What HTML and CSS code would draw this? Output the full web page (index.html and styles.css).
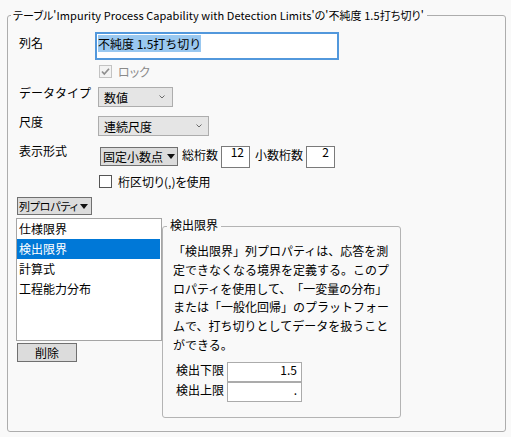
FILE: index.html
```html
<!DOCTYPE html>
<html lang="ja">
<head>
<meta charset="utf-8">
<title>列情報</title>
<link rel="stylesheet" href="styles.css">
</head>
<body>
<div class="panel">
  <div class="panel-title">テーブル'Impurity Process Capability with Detection Limits'の'不純度 1.5打ち切り'</div>

  <div class="row r-name">
    <div class="label">列名</div>
    <div class="name-field"><span class="sel">不純度 1.5打ち切り</span></div>
  </div>

  <div class="row r-lock indent">
    <div class="check disabled">
      <span class="box"><svg width="11" height="11" viewBox="0 0 11 11"><polyline points="2,5.5 4.3,8 9,2.8" fill="none" stroke="#8e8e8e" stroke-width="1.7"/></svg></span>
      <span class="check-text">ロック</span>
    </div>
  </div>

  <div class="row r-type">
    <div class="label">データタイプ</div>
    <div class="combo w-type"><span>数値</span><svg class="chev" width="6" height="4" viewBox="0 0 6 4"><polyline points="0.5,0.5 3,3 5.5,0.5" fill="none" stroke="#6a6a6a" stroke-width="1"/></svg></div>
  </div>

  <div class="row r-scale">
    <div class="label">尺度</div>
    <div class="combo w-scale"><span>連続尺度</span><svg class="chev" width="6" height="4" viewBox="0 0 6 4"><polyline points="0.5,0.5 3,3 5.5,0.5" fill="none" stroke="#6a6a6a" stroke-width="1"/></svg></div>
  </div>

  <div class="row r-format">
    <div class="label">表示形式</div>
    <div class="format-controls">
      <div class="menu-btn fmt"><span>固定小数点</span><svg width="8" height="5" viewBox="0 0 8 5"><polygon points="0,0 8,0 4,5" fill="#111"/></svg></div>
      <span class="inline-label first">総桁数</span>
      <div class="num-box">12</div>
      <span class="inline-label">小数桁数</span>
      <div class="num-box">2</div>
    </div>
  </div>

  <div class="row r-sep indent">
    <div class="check">
      <span class="box"></span>
      <span class="check-text">桁区切り(,)を使用</span>
    </div>
  </div>

  <div class="row r-props">
    <div class="menu-btn props"><span>列プロパティ</span><svg width="8" height="5" viewBox="0 0 8 5"><polygon points="0,0 8,0 4,5" fill="#111"/></svg></div>
  </div>

  <div class="props-area">
    <div class="props-left">
      <ul class="prop-list">
        <li>仕様限界</li>
        <li class="selected">検出限界</li>
        <li>計算式</li>
        <li>工程能力分布</li>
      </ul>
      <div class="push-btn">削除</div>
    </div>
    <div class="group">
      <div class="group-title">検出限界</div>
      <p class="desc">「検出限界」列プロパティは、応答を測定できなくなる境界を定義する。このプロパティを使用して、「一変量の分布」または「一般化回帰」のプラットフォームで、打ち切りとしてデータを扱うことができる。</p>
      <div class="limits">
        <span class="limit-label">検出下限</span><div class="limit-box">1.5</div>
        <span class="limit-label">検出上限</span><div class="limit-box">.</div>
      </div>
    </div>
  </div>
</div>
</body>
</html>
```
FILE: styles.css
```css
html, body {
  margin: 0;
  background: #f9f9f9;
}
body {
  font-family: "Noto Sans CJK JP", "Noto Sans", sans-serif;
  font-size: 12px;
  color: #000;
}

.panel {
  margin: 15px 5px 0 7px;
  border: 1px solid #adadad;
  border-radius: 3px;
  padding: 0 0 13px 8px;
}
.panel-title {
  width: fit-content;
  margin: -9px 0 0 -5px;
  padding: 0 3px 0 2px;
  background: #f9f9f9;
  font-size: 11px;
  letter-spacing: 0.07px;
  line-height: 16px;
  font-feature-settings: "palt";
  white-space: nowrap;
}

.row {
  display: flex;
  align-items: flex-start;
}
.indent {
  margin-left: 83px;
}
.label {
  flex: none;
  width: 79px;
  box-sizing: border-box;
  padding-left: 3px;
  line-height: 17px;
  white-space: nowrap;
}

.r-name { margin-top: 9px; }
.r-name .label { margin-top: 2px; }
.name-field {
  width: 244px;
  height: 28px;
  box-sizing: border-box;
  border: 2px solid #5298dc;
  background: #fff;
  padding: 1px 0 0 1px;
  line-height: 17px;
  white-space: nowrap;
}
.sel {
  background: #99c8f0;
}

.r-lock { margin-top: 3px; }
.check {
  display: flex;
  align-items: center;
  gap: 6px;
  height: 17px;
  line-height: 17px;
  white-space: nowrap;
}
.box {
  width: 13px;
  height: 13px;
  box-sizing: border-box;
  border: 1px solid #555;
  background: #fff;
  display: flex;
  align-items: center;
  justify-content: center;
}
.check-text {
  font-feature-settings: "palt";
}
.disabled .box {
  border-color: #c3c3c3;
  background: #f3f3f3;
}
.disabled .check-text {
  color: #8a8a8a;
}

.r-type { margin-top: 4px; }
.r-scale { margin-top: 6px; }
.combo {
  margin: 3px 0 0 3px;
  height: 20px;
  box-sizing: border-box;
  border: 1px solid #adadad;
  background: #e5e5e5;
  display: flex;
  align-items: center;
  justify-content: space-between;
  padding: 0 7px 0 5px;
  line-height: 17px;
  white-space: nowrap;
}
.w-type { width: 75px; }
.w-scale { width: 111px; padding-right: 6px; }

.r-format { margin-top: 6px; }
.format-controls {
  display: flex;
  align-items: flex-start;
  margin: 4px 0 0 5px;
  white-space: nowrap;
}
.menu-btn {
  flex: none;
  box-sizing: border-box;
  border: 1px solid #707070;
  background: #dcdcdc;
  display: flex;
  align-items: center;
  justify-content: space-between;
  line-height: 16px;
  white-space: nowrap;
}
.menu-btn svg {
  flex: none;
}
.fmt {
  width: 78px;
  height: 19px;
  margin-top: 1px;
  padding: 0 2px 0 2px;
}
.inline-label {
  line-height: 17px;
  margin-left: 5px;
}
.inline-label.first { margin-left: 4px; }
.num-box {
  flex: none;
  width: 29px;
  height: 22px;
  margin-left: 3px;
  box-sizing: border-box;
  border: 1px solid #7a7a7a;
  background: #fff;
  text-align: right;
  padding: 0 5px 0 0;
  line-height: 10px;
}

.r-sep { margin-top: 5px; }

.r-props { margin-top: 7px; }
.props {
  width: 75px;
  height: 18px;
  margin-left: 1px;
  padding: 0 3px 0 1px;
}
.props span {
  font-size: 11px;
  font-feature-settings: "palt";
  letter-spacing: -0.2px;
}

.props-area {
  display: flex;
  align-items: flex-start;
  margin-top: 3px;
}
.props-left {
  flex: none;
  width: 146px;
}
.prop-list {
  margin: 0;
  padding: 0;
  list-style: none;
  height: 123px;
  box-sizing: border-box;
  border: 1px solid #a5a5a5;
  background: #fff;
}
.prop-list li {
  line-height: 20px;
  height: 20px;
  padding-left: 2px;
  margin-right: 1px;
}
.prop-list li.selected {
  background: #0078d7;
  color: #fff;
}
.push-btn {
  margin: 2px 0 0 1px;
  width: 60px;
  height: 19px;
  box-sizing: border-box;
  border: 1px solid #707070;
  background: #dcdcdc;
  text-align: center;
  line-height: 17px;
}

.group {
  flex: none;
  width: 239px;
  margin-top: 8px;
  box-sizing: border-box;
  border: 1px solid #b4b4b4;
  border-radius: 3px;
  padding: 0 10px 15px;
}
.group-title {
  width: fit-content;
  margin: -10px 0 0 -6px;
  padding: 0 3px;
  background: #f9f9f9;
  line-height: 16px;
}
.desc {
  margin: 9px 0 0;
  line-height: 18.8px;
  text-spacing-trim: space-all;
}
.limits {
  display: grid;
  grid-template-columns: auto 75px;
  grid-auto-rows: 20px;
  column-gap: 3px;
  width: fit-content;
  margin: 7px 0 0 3px;
}
.limit-label {
  line-height: 17px;
  margin-top: -1px;
}
.limit-box {
  box-sizing: border-box;
  height: 20px;
  border: 1px solid #ababab;
  background: #fff;
  text-align: right;
  padding-right: 4px;
  line-height: 13px;
}
```
